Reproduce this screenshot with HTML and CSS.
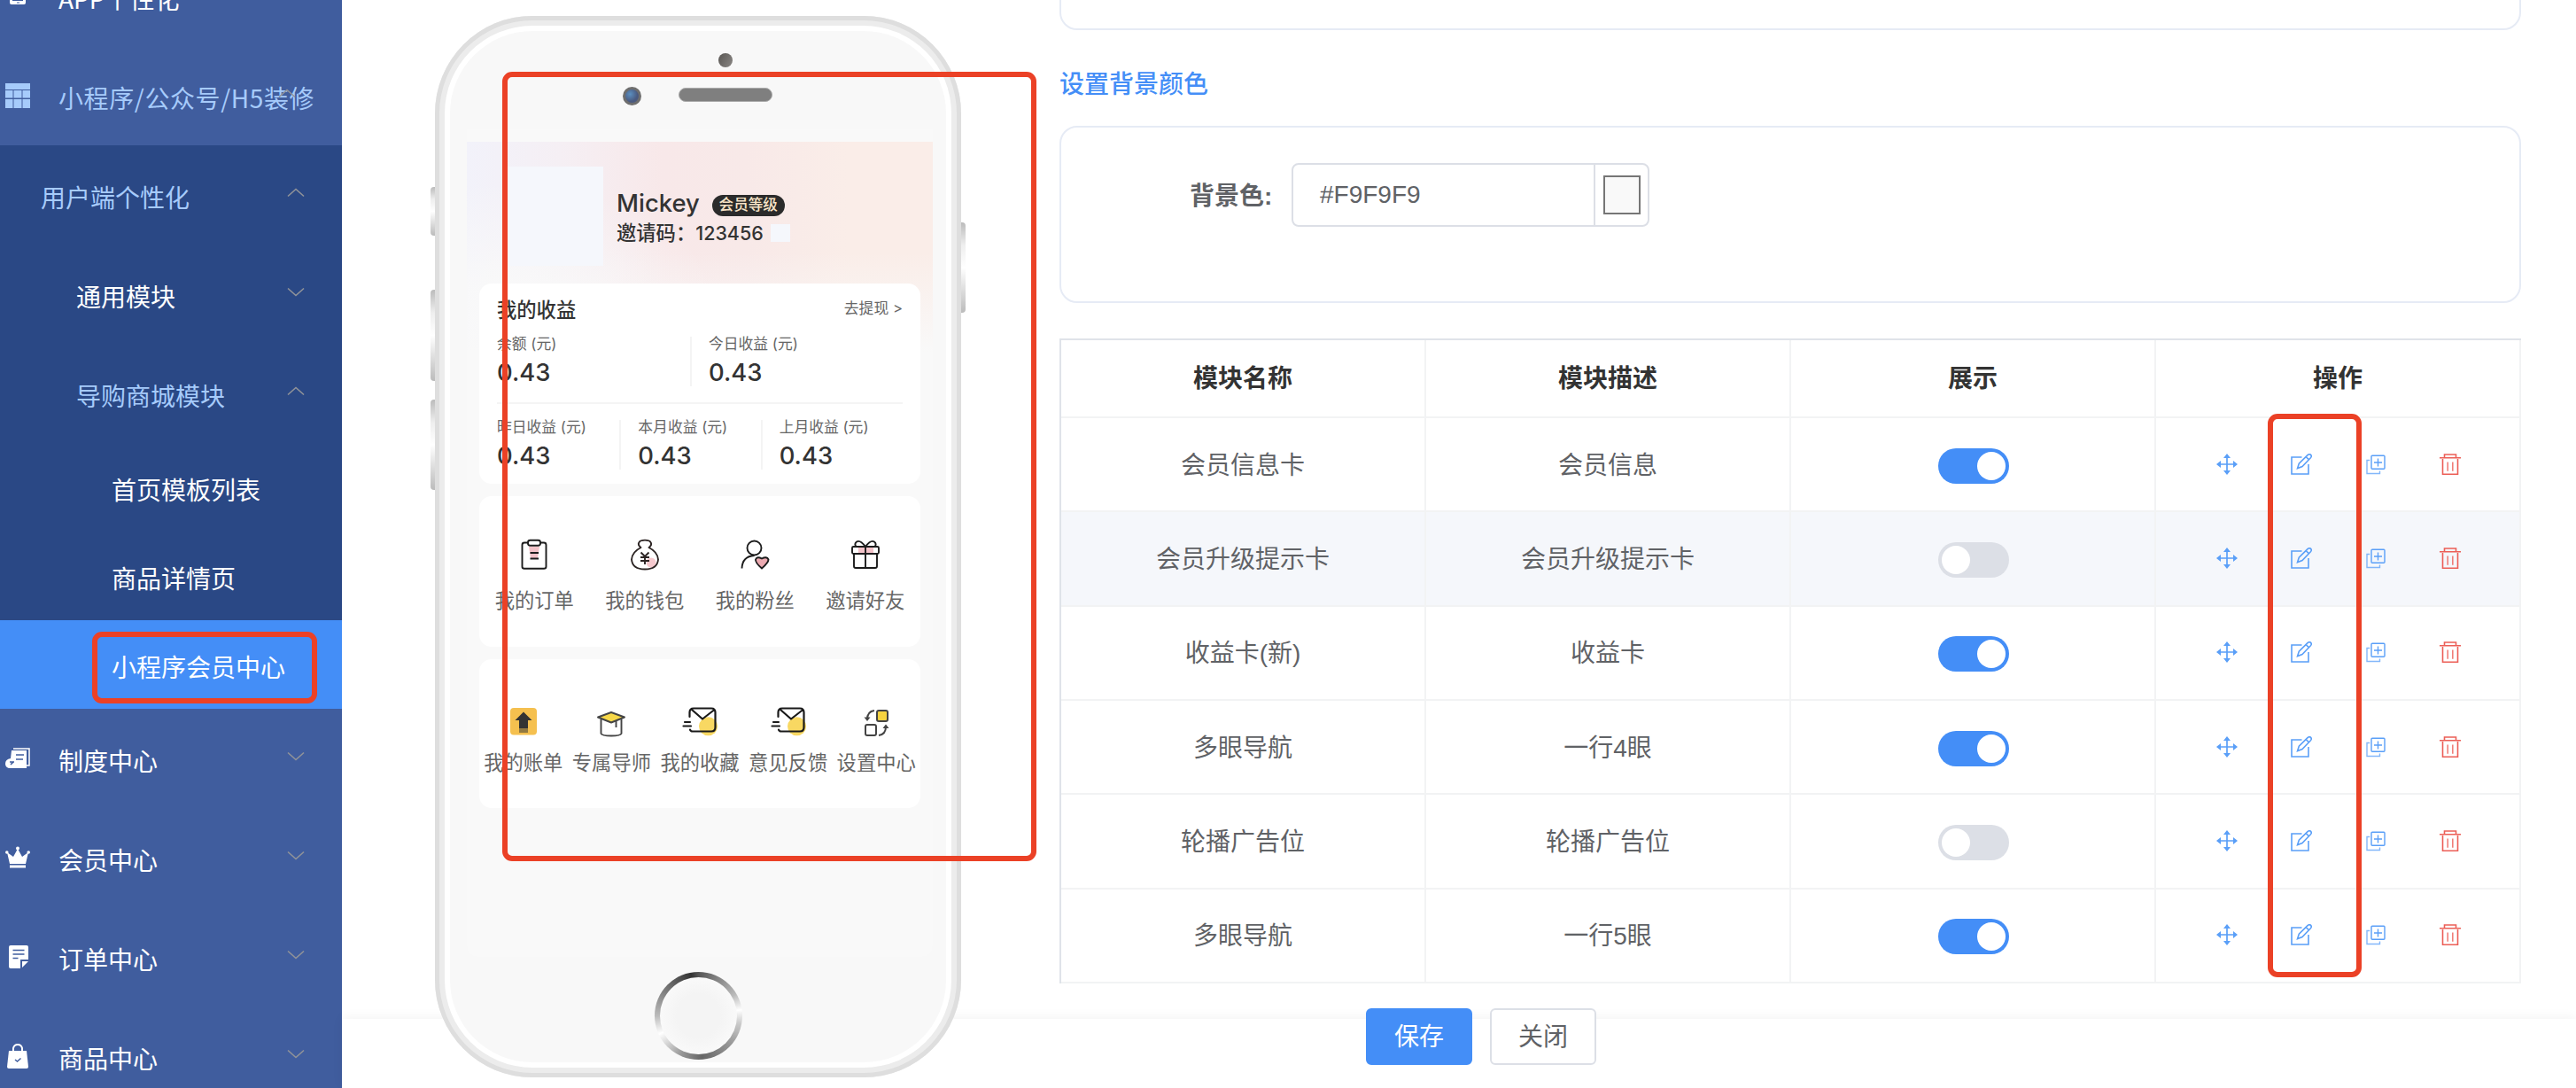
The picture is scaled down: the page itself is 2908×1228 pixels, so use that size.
FILE: index.html
```
<!DOCTYPE html>
<html lang="zh-CN">

<head>
	<meta charset="UTF-8">
	<meta name="viewport" content="width=device-width, initial-scale=1.0">
	<title>小程序会员中心</title>
	<link rel="stylesheet" href="styles.css">
</head>

<body>
	<svg class="defs">
		<symbol id="down" viewBox="0 0 20 12"><path d="M1 1.5 10 9.5 19 1.5" fill="none" stroke="currentColor" stroke-width="1.6" /></symbol>
		<symbol id="up" viewBox="0 0 20 12"><path d="M1 9.5 10 1.5 19 9.5" fill="none" stroke="currentColor" stroke-width="1.6" /></symbol>
		<symbol id="move" viewBox="0 0 24 24">
			<path d="M12 3v18M3 12h18" stroke="currentColor" stroke-width="1.7" />
			<path d="M12 0l4 5H8zM12 24l4-5H8zM0 12l5-4v8zM24 12l-5-4v8z" fill="currentColor" />
		</symbol>
		<symbol id="edit" viewBox="0 0 24 24">
			<g fill="none" stroke="currentColor" stroke-width="1.6">
				<path d="M12.5 4H1v19h19V12" />
				<path d="M7.6 16.6 9.3 11.2 19 1.6Q21-.2 22.6 1.4 24 3 22.4 4.8L13 14.6zM17.2 3.6l3.2 3.2" />
			</g>
		</symbol>
		<symbol id="copy" viewBox="0 0 24 24">
			<g fill="none" stroke="currentColor" stroke-width="1.4">
				<rect x="7" y="2.2" width="15" height="15" rx="1" />
				<path d="M14.5 5.5v9M10 10h9" />
				<path d="M5.2 7.5H2v15h14.5V19.5" opacity=".75" />
			</g>
		</symbol>
		<symbol id="trash" viewBox="0 0 24 24">
			<g fill="none" stroke="currentColor" stroke-width="1.6">
				<path d="M0 4.7h24M5.5 4.5V1h13v3.5M3.5 6v17.2h17V6" />
				<path d="M9.2 9.5v10.3M14.8 9.5v10.3" opacity=".8" />
			</g>
		</symbol>
		<symbol id="mail" viewBox="0 0 40 36">
			<circle cx="29.5" cy="22.8" r="10.5" fill="#f8d862" />
			<g fill="none" stroke="#1a1a1a" stroke-width="2.2" stroke-linecap="round" stroke-linejoin="round">
				<path d="M8.5 12V7q0-4.5 4.500-4.500h20q4.500 0 4.500 4.500v17q0 4.500-4.500 4.500H12q-2.500 0-3-2M11 4l12 10.500L36.500 4M3 18h6M1.500 22.500H10" />
			</g>
		</symbol>
	</svg>

	<aside class="menu">
		<a class="item"><svg class="ico" viewBox="0 0 28 28"><path fill="#fff" d="M9 3h10q4 0 4 4v14q0 2-2 2H7q-2 0-2-2V7q0-4 4-4z" /><path d="M8 18.500h12M13 21h3" stroke="#405d9e" /></svg>APP个性化</a>
		<a class="item open"><svg class="ico" viewBox="0 0 28 28"><path fill="currentColor" d="M0 0h28v7H0zM0 8h8.500v8.500H0zM9.500 8h9v8.500h-9zM19.500 8H28v8.500h-8.500zM0 18h8.500v10H0zM9.500 18h9v10h-9zM19.500 18H28v10h-8.500z" /></svg><span class="wide">小程序/公众号/H5装修</span><svg class="arrow"><use href="#up" /></svg></a>
		<nav class="sub">
			<a class="item lv2 open">用户端个性化<svg class="arrow"><use href="#up" /></svg></a>
			<a class="item lv3">通用模块<svg class="arrow"><use href="#down" /></svg></a>
			<a class="item lv3 open">导购商城模块<svg class="arrow"><use href="#up" /></svg></a>
			<a class="item leaf">首页模板列表</a>
			<a class="item leaf">商品详情页</a>
			<a class="item leaf active">小程序会员中心</a>
		</nav>
		<a class="item"><svg class="ico" viewBox="0 0 28 28"><path d="M9 3h18v19h-3" fill="none" stroke="#fff" stroke-width="1.500" /><path fill="#fff" d="M7 5h17v20H4q-4-1-4-5 0-5 6-6z" /><path d="M12 10h9M12 15h8M5 18h5M6 21l3-3" stroke="#405d9e" stroke-width="1.600" /></svg>制度中心<svg class="arrow"><use href="#down" /></svg></a>
		<a class="item"><svg class="ico" viewBox="0 0 28 28"><path fill="#fff" d="M2 8l7 5 5-9 5 9 7-5-3 13H5zM5 22.500h18v3H5z" /><circle cx="14" cy="3.500" r="2" fill="#fff" /><circle cx="1.800" cy="8" r="1.800" fill="#fff" /><circle cx="26.200" cy="8" r="1.800" fill="#fff" /></svg>会员中心<svg class="arrow"><use href="#down" /></svg></a>
		<a class="item"><svg class="ico" viewBox="0 0 28 28"><path fill="#fff" d="M6 1h18q2 0 2 2v14h-9v10H6q-2 0-2-2V3q0-2 2-2zM19 19h7l-7 7z" /><path d="M8.500 6.500h13M8.500 11h13M8.500 15.500h6" stroke="#405d9e" stroke-width="1.700" /></svg>订单中心<svg class="arrow"><use href="#down" /></svg></a>
		<a class="item"><svg class="ico" viewBox="0 0 28 28"><path fill="#fff" d="M4 8h20l2 18q0 2-2 2H4q-2 0-2-2z" /><path d="M9 9V5q1-4 5-4t5 4v4" fill="none" stroke="#fff" stroke-width="2" /><path d="M11 18l2.500 2 4-3.500" fill="none" stroke="#405d9e" stroke-width="1.500" /></svg>商品中心<svg class="arrow"><use href="#down" /></svg></a>
	</aside>

	<main>
		<section class="phone">
			<i class="key k1"></i><i class="key k2"></i><i class="key k3"></i><i class="key k4"></i>
			<div class="shell">
				<i class="sensor"></i><i class="camera"></i><i class="speaker"></i><i class="home"></i>
				<div class="screen">
					<header class="user">
						<div class="avatar"></div>
						<div class="info">
							<p class="name">Mickey<span class="badge">会员等级</span></p>
							<p class="code">邀请码：<span class="num">123456</span><i class="blank"></i></p>
						</div>
					</header>
					<div class="card income">
						<div class="head"><b>我的收益</b><span>去提现 &gt;</span></div>
						<div class="cells two">
							<div class="cell">余额 (元)<b>0.43</b></div>
							<div class="cell">今日收益 (元)<b>0.43</b></div>
						</div>
						<div class="cells three">
							<div class="cell">昨日收益 (元)<b>0.43</b></div>
							<div class="cell">本月收益 (元)<b>0.43</b></div>
							<div class="cell">上月收益 (元)<b>0.43</b></div>
						</div>
					</div>
					<div class="card grid4">
						<div class="nav"><svg viewBox="0 0 36 36"><path d="M12 9h12l-2 13h-8z" fill="#f3c3c9" /><g fill="none" stroke="#1c1c1c" stroke-width="1.900" stroke-linejoin="round"><path d="M11 4.500H7Q4.500 4.500 4.500 7v24.500q0 2.300 2.500 2.300h22q2.500 0 2.500-2.300V7q0-2.500-2.500-2.500h-4" /><rect x="11" y="1.800" width="14" height="6" rx="2.500" /><path d="M13.500 16h9.500M13.500 22.500h9.500" /></g></svg>我的订单</div>
						<div class="nav"><svg viewBox="0 0 36 36"><circle cx="25" cy="27" r="5.500" fill="#f6c9ce" /><g fill="none" stroke="#2c2423" stroke-width="1.900" stroke-linejoin="round"><path d="M13.500 10Q9.500 7 11.500 4 13 1.600 18 1.600T24.500 4Q26.500 7 22.500 10 32.500 15 33 23.500 32 34.500 18 34.500T3 23.500Q3.500 15 13.500 10z" /><path d="M13.500 15.500 18 20l4.500-4.500M18 20v9M13 21h10M13 25h10" /></g></svg>我的钱包</div>
						<div class="nav"><svg viewBox="0 0 36 36"><g fill="none" stroke="#1c1c1c" stroke-width="1.900"><circle cx="17.500" cy="10.500" r="8" /><path d="M3.500 33.500Q4 20 17.500 19" /><path d="M26 33.500Q18.500 27 19 23.500 20.500 19.500 26 22.500 31.500 19.500 33.500 23.500 33.500 27 26 33.500z" fill="#ecaab1" /></g></svg>我的粉丝</div>
						<div class="nav"><svg viewBox="0 0 36 36"><path d="M10 10h17v7H10z" fill="#f3c3c9" /><g fill="none" stroke="#1c1c1c" stroke-width="1.900" stroke-linejoin="round"><rect x="3" y="9" width="30" height="8" rx="1.500" /><path d="M5 17v14q0 2 2 2h22q2 0 2-2V17M18 9v24M18 9Q12 1 8 3.500 5 6 7.500 9M18 9Q24 1 28 3.500 31 6 28.500 9" /></g></svg>邀请好友</div>
					</div>
					<div class="card grid5">
						<div class="nav"><svg viewBox="0 0 36 36"><rect x="3" y="2" width="30" height="30.500" rx="4" fill="#f5c04f" /><path d="M18 6.500 27.500 16H23v9.500H13V16H8.500zM13 26.500h10v1H13zM13 28.500h10v1H13z" fill="#333" /></svg>我的账单</div>
						<div class="nav"><svg viewBox="0 0 36 36"><g stroke="#444" stroke-width="1.900" stroke-linejoin="round"><path d="M6.500 15v16q1 2.500 11.500 2.500T29.500 31V15" fill="none" /><path d="M18 7 33 12.500 18 18.500 3 12.500z" fill="#f7d848" /><path d="M23.500 17v7" /></g></svg>专属导师</div>
						<div class="nav"><svg class="mail"><use href="#mail" /></svg>我的收藏</div>
						<div class="nav"><svg class="mail"><use href="#mail" /></svg>意见反馈</div>
						<div class="nav"><svg viewBox="0 0 36 36"><g fill="none" stroke="#444" stroke-width="2" stroke-linejoin="round"><rect x="19" y="5" width="12" height="12" rx="2" fill="#f7d340" /><rect x="6" y="21" width="12" height="12" rx="2" /><path d="M16 5Q8 6 8 15M21 33q8-1 8-10" /></g><path d="M4.500 12.500h7L8 17zM25.500 25h7L29 20.500z" fill="#444" /></svg>设置中心</div>
					</div>
				</div>
			</div>
		</section>

		<section class="editor">
			<div class="panel prev"></div>
			<h3>设置背景颜色</h3>
			<div class="panel">
				<label>背景色:</label>
				<div class="input"><span>#F9F9F9</span><div class="pick"><i></i></div></div>
			</div>
			<table>
				<thead>
					<tr><th>模块名称</th><th>模块描述</th><th>展示</th><th>操作</th></tr>
				</thead>
				<tbody>
					<tr>
						<td>会员信息卡</td><td>会员信息</td><td><i class="switch on"></i></td>
						<td><div class="ops"><svg><use href="#move" /></svg><svg><use href="#edit" /></svg><svg><use href="#copy" /></svg><svg class="del"><use href="#trash" /></svg></div></td>
					</tr>
					<tr class="hover">
						<td>会员升级提示卡</td><td>会员升级提示卡</td><td><i class="switch"></i></td>
						<td><div class="ops"><svg><use href="#move" /></svg><svg><use href="#edit" /></svg><svg><use href="#copy" /></svg><svg class="del"><use href="#trash" /></svg></div></td>
					</tr>
					<tr>
						<td>收益卡(新)</td><td>收益卡</td><td><i class="switch on"></i></td>
						<td><div class="ops"><svg><use href="#move" /></svg><svg><use href="#edit" /></svg><svg><use href="#copy" /></svg><svg class="del"><use href="#trash" /></svg></div></td>
					</tr>
					<tr>
						<td>多眼导航</td><td>一行4眼</td><td><i class="switch on"></i></td>
						<td><div class="ops"><svg><use href="#move" /></svg><svg><use href="#edit" /></svg><svg><use href="#copy" /></svg><svg class="del"><use href="#trash" /></svg></div></td>
					</tr>
					<tr>
						<td>轮播广告位</td><td>轮播广告位</td><td><i class="switch"></i></td>
						<td><div class="ops"><svg><use href="#move" /></svg><svg><use href="#edit" /></svg><svg><use href="#copy" /></svg><svg class="del"><use href="#trash" /></svg></div></td>
					</tr>
					<tr>
						<td>多眼导航</td><td>一行5眼</td><td><i class="switch on"></i></td>
						<td><div class="ops"><svg><use href="#move" /></svg><svg><use href="#edit" /></svg><svg><use href="#copy" /></svg><svg class="del"><use href="#trash" /></svg></div></td>
					</tr>
				</tbody>
			</table>
		</section>

		<footer>
			<button class="primary">保存</button>
			<button>关闭</button>
		</footer>
	</main>

	<i class="mark m-menu"></i>
	<i class="mark m-phone"></i>
	<i class="mark m-edit"></i>
</body>

</html>
```
FILE: styles.css
```
* {
	margin: 0;
	padding: 0;
	box-sizing: border-box;
}

body {
	position: relative;
	display: flex;
	width: 2908px;
	height: 1228px;
	overflow: hidden;
	background: #fff;
	color: #606266;
	font: 28px/1.4 "Liberation Sans", "Noto Sans CJK SC", sans-serif;
}

svg,
i {
	display: block;
}

.defs {
	position: absolute;
	width: 0;
	height: 0;
}

/* menu */
.menu {
	width: 386px;
	flex: none;
	margin-top: -60px;
	background: #405d9e;
	color: #fff;
	font-family: "Noto Sans CJK SC", sans-serif;
}

.item {
	display: flex;
	align-items: center;
	height: 112px;
	padding: 6px 42px 0 6px;
	white-space: nowrap;
}

.ico {
	width: 28px;
	height: 28px;
	margin: -6px 32px 0 0;
}

.arrow {
	width: 20px;
	height: 12px;
	margin: -10px 0 0 auto;
	color: #909399;
}

.open {
	color: #a6cbfb;
}

.wide {
	width: 258px;
	margin-right: -10px;
	letter-spacing: .6px;
}

.wide + .arrow {
	margin-left: 0;
}

.sub {
	background: #2a4885;
}

.lv2 {
	padding-left: 46px;
}

.lv3 {
	padding-left: 86px;
}

.leaf {
	height: 100px;
	padding-left: 126px;
}

.active {
	background: #448ef7;
}

main {
	position: relative;
	display: flex;
	flex: 1;
}

/* phone */
.phone {
	position: relative;
	z-index: 2;
	width: 594px;
	height: 1198px;
	margin: 18px 0 0 105px;
}

.shell {
	position: relative;
	height: 100%;
	padding: 128px 32px 0 36px;
	border-radius: 110px;
	background: #f8f8f8;
	box-shadow: inset 0 0 0 5px #dedede, inset 0 0 0 11px #ececec, inset 0 0 0 17px #fff;
}

.key {
	position: absolute;
	left: -5px;
	width: 7px;
	border-radius: 4px 0 0 4px;
	background: linear-gradient(#bbb, #eee 25%, #fff 50%, #ddd 75%, #bbb);
}

.k1 {
	top: 193px;
	height: 55px;
}

.k2 {
	top: 309px;
	height: 103px;
}

.k3 {
	top: 433px;
	height: 102px;
}

.k4 {
	top: 233px;
	left: 592px;
	height: 102px;
	border-radius: 0 4px 4px 0;
}

.sensor,
.camera,
.speaker,
.home {
	position: absolute;
	border-radius: 50%;
}

.sensor {
	top: 42px;
	left: 320px;
	width: 16px;
	height: 16px;
	background: linear-gradient(120deg, #595653, #8a8784);
}

.camera {
	top: 80px;
	left: 212px;
	width: 21px;
	height: 21px;
	border: 3px solid #6e6e6e;
	background: radial-gradient(circle at 35% 35%, #5b8fc0, #4a5a80 60%);
}

.speaker {
	top: 81px;
	left: 275px;
	width: 106px;
	height: 16px;
	border-radius: 8px;
	border: 1px solid #aaa;
	background: #7f7f7f;
}

.home {
	top: 1079px;
	left: 248px;
	width: 99px;
	height: 99px;
	background: conic-gradient(#555, #888 30deg, #bbb 60deg, #fff 82deg, #ccc 100deg, #999 130deg, #666 175deg, #999 205deg, #fff 245deg, #bbb 270deg, #777 310deg, #333 350deg, #555);
}

.home::after {
	content: "";
	position: absolute;
	inset: 6px;
	border-radius: 50%;
	background: radial-gradient(#f4f4f4 40%, #f9f9f9 70%);
}

.screen {
	height: 934px;
	padding: 14px 14px 0;
	border-radius: 0 0 12px 12px;
	background:
		radial-gradient(ellipse 45% 130px at 8% 190px, #f9f9f9, #f9f9f900),
		linear-gradient(#f9f9f900 50%, #f9f9f9 95%) 0 14px/100% 250px no-repeat,
		linear-gradient(90deg, #f2f2fa, #f5eff4 20%, #f8e8e9 42%, #f8e9e8 60%, #faede8 82%) 0 14px/100% 250px no-repeat,
		#f9f9f9;
	color: #666;
	font-family: Inter, "Noto Sans CJK SC", sans-serif;
	font-size: 22.3px;
}

.user {
	display: flex;
	height: 160px;
	padding: 28px 0 0 28px;
	color: #333;
	font-weight: 500;
}

.avatar {
	width: 112px;
	height: 112px;
	margin-right: 15px;
	background: #f5f7fc;
}

.info p {
	display: flex;
	align-items: center;
}

.name {
	height: 36px;
	margin-top: 23px;
	font-size: 27.4px;
}

.badge {
	width: 82px;
	height: 24px;
	margin: 6px 0 0 14px;
	border-radius: 12px;
	background: #2b2b2b;
	color: #f8e3c7;
	font-size: 16.6px;
	line-height: 23px;
	text-align: center;
}

.code {
	height: 32px;
}

.num {
	font-size: 21.5px;
}

.blank {
	width: 22px;
	height: 20px;
	margin-left: 8px;
	background: #f5f7fc;
}

.card {
	border-radius: 14px;
	background: #fff;
	margin-bottom: 14px;
}

.income {
	height: 226px;
	padding-left: 20px;
}

.head {
	display: flex;
	justify-content: space-between;
	align-items: center;
	height: 60px;
	padding-right: 20px;
	font-size: 16.8px;
}

.head b {
	color: #333;
	font-size: 22.3px;
	font-weight: 500;
}

.head span {
	margin-top: -2px;
}

.cells {
	display: grid;
	grid-template-columns: repeat(2, 1fr);
	position: relative;
	height: 94px;
}

.two::after {
	content: "";
	position: absolute;
	top: 74px;
	width: 458px;
	height: 2px;
	background: #f4f4f4;
}

.three {
	grid-template-columns: repeat(3, 1fr);
	height: 72px;
}

.cell {
	height: 56px;
	margin-right: 19px;
	border-right: 2px solid #f4f4f4;
	font-size: 16.8px;
	line-height: 16px;
	white-space: nowrap;
}

.cell:last-child {
	border: 0;
}

.cell b {
	display: block;
	margin-top: 8px;
	color: #333;
	font-size: 27.4px;
	font-weight: 500;
	line-height: 32px;
}

.grid4,
.grid5 {
	display: grid;
	grid-template-columns: repeat(4, 1fr);
	height: 170px;
	padding-top: 48px;
}

.grid5 {
	grid-template-columns: repeat(5, 1fr);
	height: 168px;
	padding-top: 53px;
}

.nav {
	display: flex;
	flex-direction: column;
	align-items: center;
	gap: 18px;
	white-space: nowrap;
}

.nav svg {
	width: 36px;
	height: 36px;
}

.grid5 .nav {
	gap: 12px;
}

.nav .mail {
	width: 40px;
}

/* editor */
.editor {
	width: 1650px;
	margin-left: 111px;
	color: #606266;
}

.panel {
	display: flex;
	height: 200px;
	padding: 40px 0 0 145px;
	border: 2px solid #e6ebf5;
	border-radius: 20px;
}

.prev {
	margin-top: -166px;
}

h3 {
	height: 108px;
	color: #448ef7;
	font-size: 28px;
	font-weight: 500;
	line-height: 123px;
}

label {
	width: 115px;
	font-weight: 700;
	line-height: 75px;
}

.input {
	display: flex;
	justify-content: space-between;
	width: 404px;
	height: 72px;
	border: 2px solid #dcdfe6;
	border-radius: 8px;
	line-height: 68px;
}

.input span {
	padding-left: 30px;
}

.pick {
	width: 61px;
	padding: 12px 0 0 9px;
	border-left: 2px solid #dcdfe6;
}

.pick i {
	width: 42px;
	height: 44px;
	border: 2px solid #767676;
	background: #f9f9f9;
}

table {
	width: 1650px;
	margin-top: 40px;
	border-collapse: separate;
	border-spacing: 0;
	border: solid #dfe3e9;
	border-width: 2px 0 0 2px;
	table-layout: fixed;
	text-align: center;
}

th,
td {
	height: 106.33px;
	padding-top: 2px;
	border: solid #f2f3f4;
	border-width: 0 2px 2px 0;
}

th {
	height: 88px;
	color: #333;
	font-weight: 700;
}

.hover {
	background: #f5f7fb;
}

.switch {
	position: relative;
	left: 1px;
	width: 80px;
	height: 40px;
	margin: 1px auto 0;
	padding: 4px;
	border-radius: 20px;
	background: #dcdfe6;
}

.switch::after {
	content: "";
	display: block;
	width: 32px;
	height: 32px;
	border-radius: 50%;
	background: #fff;
}

.on {
	background: #448ef7;
}

.on::after {
	margin-left: auto;
}

.ops {
	display: flex;
	justify-content: center;
	gap: 60px;
	margin-top: -3px;
	padding-left: 2px;
	color: #5a9ff8;
}

.ops svg {
	width: 24px;
	height: 24px;
}

.ops .del {
	color: #ec5f57;
}

footer {
	position: absolute;
	inset: auto 0 0;
	display: flex;
	gap: 20px;
	height: 78px;
	padding-left: 1156px;
	background: #fff;
	box-shadow: 0 -2px 12px #0000000c;
}

button {
	width: 120px;
	height: 64px;
	margin-top: -12px;
	padding-top: 2px;
	border: 2px solid #dcdfe6;
	border-radius: 6px;
	background: #fff;
	color: #606266;
	font: inherit;
}

.primary {
	border-color: #448ef7;
	background: #448ef7;
	color: #fff;
}

/* red frames */
.mark {
	position: absolute;
	z-index: 3;
	border: 6px solid #eb4126;
	border-radius: 11px;
}

.m-menu {
	top: 713px;
	left: 104px;
	width: 254px;
	height: 81px;
}

.m-phone {
	top: 81px;
	left: 567px;
	width: 603px;
	height: 891px;
}

.m-edit {
	top: 467px;
	left: 2560px;
	width: 106px;
	height: 636px;
}
```
